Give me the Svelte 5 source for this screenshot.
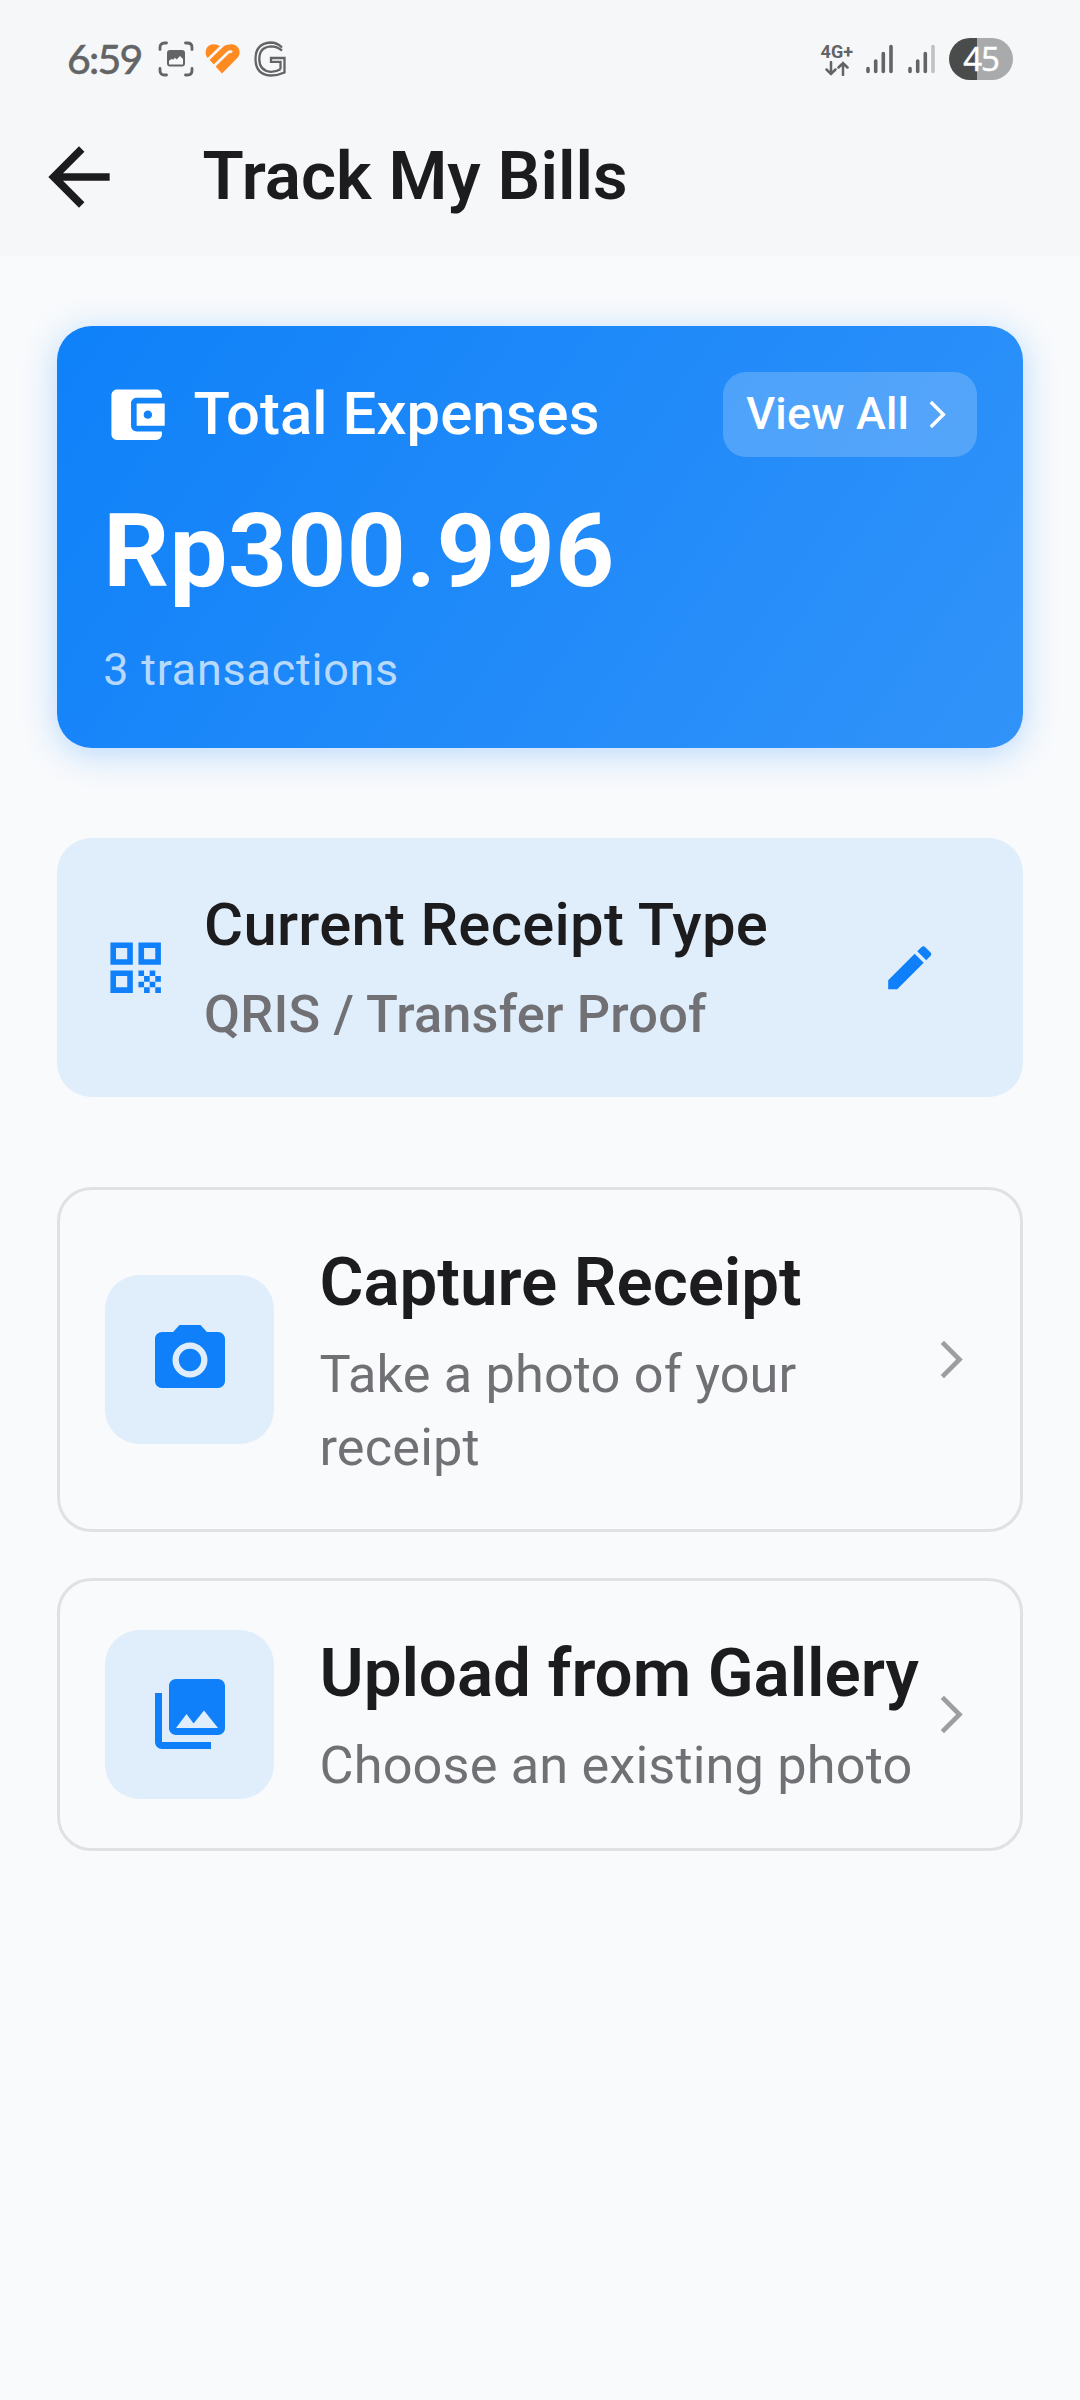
<script>
  const options = [
    {
      icon: 'M9 2 7.17 4H4c-1.1 0-2 .9-2 2v12c0 1.1.9 2 2 2h16c1.1 0 2-.9 2-2V6c0-1.1-.9-2-2-2h-3.17L15 2H9zm3 15c-2.76 0-5-2.24-5-5s2.24-5 5-5 5 2.24 5 5-2.24 5-5 5zM12 8.8a3.2 3.2 0 1 0 0 6.4 3.2 3.2 0 0 0 0-6.4z',
      title: 'Capture Receipt',
      text: 'Take a photo of your receipt',
      kind: 'capture'
    },
    {
      icon: 'M22 16V4c0-1.1-.9-2-2-2H8c-1.1 0-2 .9-2 2v12c0 1.1.9 2 2 2h12c1.1 0 2-.9 2-2zm-11-4 2.03 2.71L16 11l4 5H8l3-4zM2 6v14c0 1.1.9 2 2 2h14v-2H4V6H2z',
      title: 'Upload from Gallery',
      text: 'Choose an existing photo',
      kind: 'upload'
    }
  ];
  const arrowIos = 'M6.23 20.23 8 22 18 12 8 2 6.23 3.77 14.46 12z';
</script>

<div class="screen">
  <div class="status">
    <span class="clock">6:59</span>
    <svg class="shot" viewBox="0 0 36 36">
      <g fill="none" stroke="#636466" stroke-width="2.8" stroke-linecap="round">
        <path d="M2 8.500V6.500Q2 2 6.500 2H8.500M27.500 2h2Q34 2 34 6.500v2M34 27.500v2q0 4.500-4.500 4.500h-2M8.500 34h-2Q2 34 2 29.500v-2" />
      </g>
      <path fill="#636466" fill-rule="evenodd" d="M12 9h12q3 0 3 3v10.500q0 3-3 3H12q-3 0-3-3V12q0-3 3-3zM11 19.800v3.700h14v-5.500l-3-3-3.400 3.400-1.600-1.600-2 2-1-1z" />
    </svg>
    <svg class="heart" viewBox="0 0 36 32">
      <path fill="#ff8a1f" d="M1.500 13.500C-1 8 2 1.500 8.500 1.300Q13 1.300 16.500 4.600 21.500 1 27 1.300C34 2 37 9.500 32.500 14.800L17 30.500z" />
      <path d="M1 18.500 17.500 2.500M6.500 25.500 23 9.500Q25.300 7.800 27 9.300" fill="none" stroke="#f6f7f9" stroke-width="2.700" />
    </svg>
    <svg class="gmark" viewBox="0 0 32 36">
      <g fill="none" stroke="#636466" stroke-width="2.300">
        <path d="M28 6.500Q23 1.500 16.500 1.500 1.500 2.500 1.500 18T16.500 34.500q7.500 0 14-3V17H17v3.800h9.500v7.500" />
        <path d="M28 9.500Q23 5.300 17 5.300 5.300 6 5.300 18T17 30.800q5.500 0 9.500-2.500" />
      </g>
    </svg>
    <div class="net">
      <span>4G+</span>
      <svg viewBox="0 0 24 15"><path d="M6 1v12M1.500 8.500 6 13l4.500-4.500M18 14V2M13.500 6.500 18 2l4.500 4.500" fill="none" stroke="#636466" stroke-width="2.500" stroke-linecap="round" /></svg>
    </div>
    <svg class="bars" viewBox="0 0 28 30"><path d="M2 24.500v3M9.700 17v10.500M17.300 9.500v18M25 2.500v25" stroke="#636466" stroke-width="3.600" stroke-linecap="round" /></svg>
    <svg class="bars" viewBox="0 0 28 30"><path d="M2 24.500v3M9.700 17v10.500M17.300 9.500v18" stroke="#636466" stroke-width="3.600" stroke-linecap="round" /><path d="M25 2.500v25" stroke="#c0c1c3" stroke-width="3.600" stroke-linecap="round" /></svg>
    <div class="battery">45</div>
  </div>

  <header>
    <svg class="back" viewBox="0 0 24 24"><path d="M20 11H7.830l5.590-5.590L12 4l-8 8 8 8 1.410-1.410L7.830 13H20z" /></svg>
    <h1>Track My Bills</h1>
  </header>

  <main>
    <section class="total">
      <div class="total-head">
        <svg class="wallet" viewBox="0 0 24 24"><path d="M21 18v1c0 1.100-.9 2-2 2H5c-1.110 0-2-.9-2-2V5c0-1.100.89-2 2-2h14c1.100 0 2 .9 2 2v1h-9c-1.110 0-2 .9-2 2v8c0 1.100.89 2 2 2h9zm-9-2h10V8H12v8zm4-2.500c-.83 0-1.500-.67-1.500-1.500s.67-1.500 1.500-1.500 1.500.67 1.500 1.500-.67 1.500-1.500 1.500z" /></svg>
        <span class="label">Total Expenses</span>
        <div class="view-all"><span>View All</span><svg viewBox="0 0 24 24"><path d={arrowIos} /></svg></div>
      </div>
      <div class="amount">Rp300.996</div>
      <div class="count">3 transactions</div>
    </section>

    <section class="type">
      <svg class="qr" viewBox="0 0 24 24"><path d="M3 11h8V3H3v8zm2-6h4v4H5V5zM3 21h8v-8H3v8zm2-6h4v4H5v-4zM13 3v8h8V3h-8zm6 6h-4V5h4v4zM19 19h2v2h-2zM13 13h2v2h-2zM15 15h2v2h-2zM13 17h2v2h-2zM15 19h2v2h-2zM17 17h2v2h-2zM17 13h2v2h-2zM19 15h2v2h-2z" /></svg>
      <div class="type-text">
        <div class="type-title">Current Receipt Type</div>
        <div class="type-value">QRIS / Transfer Proof</div>
      </div>
      <svg class="edit" viewBox="0 0 24 24"><path d="M3 17.250V21h3.750L17.810 9.940l-3.750-3.750L3 17.250zM20.710 7.040c.39-.39.39-1.020 0-1.410l-2.340-2.340c-.39-.39-1.020-.39-1.410 0l-1.830 1.830 3.750 3.750 1.830-1.830z" /></svg>
    </section>

    {#each options as o}
      <section class="option {o.kind}">
        <div class="tile"><svg viewBox="0 0 24 24"><path d={o.icon} /></svg></div>
        <div class="option-text">
          <div class="option-title">{o.title}</div>
          <div class="option-sub">{o.text}</div>
        </div>
        <svg class="go" viewBox="0 0 24 24"><path d={arrowIos} /></svg>
      </section>
    {/each}
  </main>
</div>

<style>
  :global(body) { background: #f8fafc; }
  svg { display: block; flex: none; }
  .screen {
    box-sizing: border-box;
    width: 1080px;
    height: 2400px;
    font-family: Roboto, "Liberation Sans", sans-serif;
    color: #1c1c1e;
    background: linear-gradient(#f6f7f9 256px, #f8fafc 256px);
  }
  .status {
    box-sizing: border-box;
    height: 96px;
    padding: 22px 67px 0 67px;
    display: flex;
    align-items: center;
    color: #636466;
  }
  .clock { width: 91px; font: 400 41px/74px Lato, sans-serif; letter-spacing: -1.800px; -webkit-text-stroke: 0.6px #636466; }
  .shot { width: 36px; height: 36px; }
  .heart { width: 36px; height: 32px; margin-left: 11px; }
  .gmark { width: 32px; height: 36px; margin-left: 13px; }
  .net { margin-left: auto; display: flex; flex-direction: column; align-items: center; font-weight: 700; font-size: 18px; line-height: 18px; }
  .net svg { width: 24px; height: 15px; }
  .bars { width: 28px; height: 30px; margin-left: 13px; }
  .bars + .bars { margin-left: 14px; }
  .battery {
    width: 64px;
    height: 42px;
    margin-left: 13px;
    border-radius: 21px;
    background: linear-gradient(90deg, #4a4b4b 44%, #a9aaac 44%);
    color: #fff;
    font: 500 33px/42px "Open Sans", sans-serif;
    letter-spacing: -1px;
    text-align: center;
    -webkit-text-stroke: 0.5px #fff;
  }
  header { height: 161px; padding-left: 33px; display: flex; align-items: center; }
  .back { width: 92px; height: 92px; fill: #1c1c1e; }
  h1 { margin: 0 0 0 77.500px; padding-bottom: 1px; font-size: 67.300px; line-height: 80px; font-weight: 600; letter-spacing: 0.050px; }
  main { padding: 69px 57.300px 0; }
  .total {
    box-sizing: border-box;
    height: 422px;
    padding: 46px;
    border-radius: 34.500px;
    background: linear-gradient(125deg, #0f81f9, #3193f9);
    box-shadow: 0 6px 34px rgba(13, 128, 250, 0.27);
    color: #fff;
  }
  .total-head { height: 84.500px; display: flex; align-items: center; }
  .wallet { width: 67.300px; height: 67.300px; fill: #fff; }
  .label { margin-left: 23px; font-size: 59.800px; font-weight: 500; letter-spacing: 0.070px; }
  .view-all {
    box-sizing: border-box;
    width: 253.500px;
    height: 84.500px;
    margin-left: auto;
    padding: 0 23px;
    display: flex;
    align-items: center;
    justify-content: space-between;
    border-radius: 23px;
    background: rgba(255, 255, 255, 0.2);
    font-size: 44.850px;
    line-height: 60px;
    font-weight: 500;
    letter-spacing: 0.200px;
  }
  .view-all span { padding-bottom: 1px; }
  .view-all svg { width: 33px; height: 33px; fill: #fff; }
  .amount { margin-top: 34px; font-size: 102.900px; line-height: 120px; font-weight: 700; letter-spacing: 0.4px; }
  .count { margin-top: 29px; font-size: 44.850px; line-height: 60px; letter-spacing: 0.800px; color: rgba(255, 255, 255, 0.7); }
  .type {
    box-sizing: border-box;
    height: 258.750px;
    margin-top: 90px;
    padding: 0 84px 0 45px;
    display: flex;
    align-items: center;
    border-radius: 34.500px;
    background: #e0eefb;
  }
  .qr { width: 67.300px; height: 67.300px; fill: #0f80fa; }
  .type-text { flex: 1; margin-left: 34.500px; }
  .type-title { font-size: 59.800px; line-height: 84px; font-weight: 500; letter-spacing: 0.280px; }
  .type-value { margin-top: 11px; font-size: 52.300px; line-height: 73px; font-weight: 500; letter-spacing: 0.180px; color: #717175; }
  .edit { width: 57.500px; height: 57.500px; fill: #0f80fa; }
  .option {
    box-sizing: border-box;
    height: 345.500px;
    margin-top: 90px;
    padding: 0 45.500px 0 45px;
    display: flex;
    align-items: center;
    border: 3px solid #e0e1e3;
    border-radius: 34.500px;
  }
  .upload { height: 273px; margin-top: 45.500px; }
  .tile { width: 168.500px; height: 168.500px; flex: none; display: flex; align-items: center; justify-content: center; border-radius: 34.500px; background: #e0eefb; }
  .tile svg { width: 84px; height: 84px; fill: #0f80fa; }
  .option-text { flex: 1; min-width: 0; margin-left: 45.700px; }
  .option-title { font-size: 67.300px; line-height: 94px; font-weight: 600; white-space: nowrap; letter-spacing: -0.050px; }
  .option-sub { margin-top: 8.600px; font-size: 52.300px; line-height: 73px; letter-spacing: 0.150px; color: #717175; }
  .go { width: 45px; height: 45px; fill: #9e9ea0; }
</style>
